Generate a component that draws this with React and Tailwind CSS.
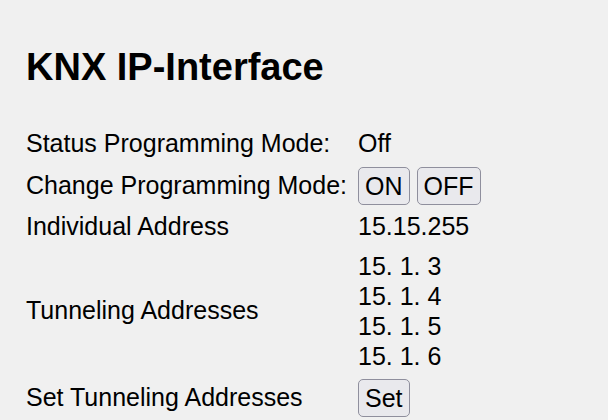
import React from 'react';

const addresses = ['15. 1. 3', '15. 1. 4', '15. 1. 5', '15. 1. 6'];

function Btn({ children }) {
  return (
    <button className="h-[38px] px-[6px] bg-[#e9e9ed] border border-[#8f8f9d] rounded-[5px] text-black leading-none">
      {children}
    </button>
  );
}

function Row({ label, h, children }) {
  return (
    <div className={`flex items-center ${h}`}>
      <div className="w-[332px] shrink-0">{label}</div>
      <div>{children}</div>
    </div>
  );
}

export default function App() {
  return (
    <div
      className="w-[608px] h-[420px] overflow-hidden bg-[#f0f0f0] text-black px-[26px] pt-[46px] text-[25px]"
      style={{ fontFamily: '"Liberation Sans", Arial, sans-serif' }}
    >
      <h2 className="text-[38px] font-bold leading-[43px]">KNX IP-Interface</h2>
      <div className="mt-[40px] flex flex-col">
        <Row label="Status Programming Mode:" h="h-[30px]">
          Off
        </Row>
        <Row label="Change Programming Mode:" h="h-[54px]">
          <div className="flex gap-[7px]">
            <Btn>ON</Btn>
            <Btn>OFF</Btn>
          </div>
        </Row>
        <Row label="Individual Address" h="h-[28px]">
          15.15.255
        </Row>
        <Row label="Tunneling Addresses" h="h-[140px]">
          <div className="flex flex-col">
            {addresses.map((a) => (
              <div key={a} className="leading-[30px]">
                {a}
              </div>
            ))}
          </div>
        </Row>
        <Row label="Set Tunneling Addresses" h="h-[34px]">
          <Btn>Set</Btn>
        </Row>
      </div>
    </div>
  );
}
